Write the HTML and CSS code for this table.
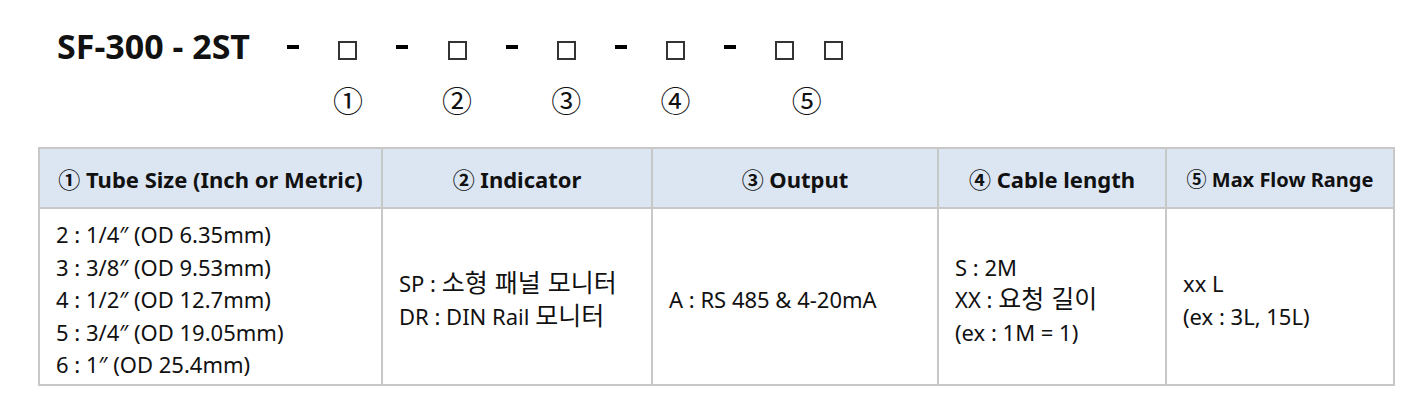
FILE: index.html
```html
<!DOCTYPE html>
<html lang="ko">
<head>
    <meta charset="UTF-8">
    <meta name="viewport" content="width=device-width, initial-scale=1.0">
    <title>SF-300 Ordering Code</title>
    <link rel="stylesheet" href="styles.css">
</head>
<body>
    <div class="code">
        <span class="model">SF-300 - 2ST</span>
        <span class="slot"><i class="dash"></i></span>
        <span class="slot"><i class="box"></i></span>
        <span class="slot"><i class="dash"></i></span>
        <span class="slot"><i class="box"></i></span>
        <span class="slot"><i class="dash"></i></span>
        <span class="slot"><i class="box"></i></span>
        <span class="slot"><i class="dash"></i></span>
        <span class="slot"><i class="box"></i></span>
        <span class="slot"><i class="dash"></i></span>
        <span class="slot"><i class="box"></i></span>
        <span class="slot"><i class="box"></i></span>

        <span class="num n1">①</span>
        <span class="num n2">②</span>
        <span class="num n3">③</span>
        <span class="num n4">④</span>
        <span class="num n5">⑤</span>
    </div>

    <table class="spec">
        <colgroup>
            <col class="c1">
            <col class="c2">
            <col class="c3">
            <col class="c4">
            <col class="c5">
        </colgroup>
        <thead>
            <tr>
                <th>① Tube Size (Inch or Metric)</th>
                <th>② Indicator</th>
                <th>③ Output</th>
                <th>④ Cable length</th>
                <th class="small">⑤ Max Flow Range</th>
            </tr>
        </thead>
        <tbody>
            <tr>
                <td>
                    2 : 1/4″ (OD 6.35mm)<br>
                    3 : 3/8″ (OD 9.53mm)<br>
                    4 : 1/2″ (OD 12.7mm)<br>
                    5 : 3/4″ (OD 19.05mm)<br>
                    6 : 1″ (OD 25.4mm)
                </td>
                <td>
                    SP : <span class="ko">소형 패널 모니터</span><br>
                    DR : DIN Rail <span class="ko">모니터</span>
                </td>
                <td>A : RS 485 &amp; 4-20mA</td>
                <td>
                    S : 2M<br>
                    XX : <span class="ko">요청 길이</span><br>
                    (ex : 1M = 1)
                </td>
                <td>
                    xx L<br>
                    (ex : 3L, 15L)
                </td>
            </tr>
        </tbody>
    </table>
</body>
</html>
```

FILE: styles.css
```css
body {
    margin: 0;
    background-color: #fff;
    color: #111;
    font-family: "Noto Sans", "Noto Sans CJK KR", sans-serif;
}
.code {
    display: grid;
    grid-template-columns: 209px repeat(10, 54.6px) 44px;
    grid-template-rows: 40px 40px;
    row-gap: 9px;
    padding: 30px 0 0 57px;
}
.model {
    font-size: 34px;
    font-weight: bold;
    line-height: 32px;
    white-space: nowrap;
}
.slot {
    display: flex;
    align-items: center;
    justify-content: center;
}
.dash {
    display: block;
    width: 12px;
    height: 4px;
    background-color: #000;
    margin-bottom: 6px;
}
.box {
    display: block;
    width: 15px;
    height: 15px;
    border: 2px solid #333;
}
.num {
    grid-row: 2;
    text-align: center;
    font-family: "Noto Sans CJK KR", sans-serif;
    font-size: 30px;
    line-height: 40px;
}
.n1 { grid-column: 3; }
.n2 { grid-column: 5; }
.n3 { grid-column: 7; }
.n4 { grid-column: 9; }
.n5 { grid-column: 11 / span 2; }
.spec {
    margin: 28px 0 0 38px;
    width: 1355px;
    border-collapse: collapse;
    table-layout: fixed;
}
.c1 { width: 343px; }
.c2 { width: 270px; }
.c3 { width: 286px; }
.c4 { width: 228px; }
.c5 { width: 228px; }
.spec th, .spec td {
    border: 2px solid #c8c8c8;
}
.spec th {
    height: 58px;
    padding: 0;
    background-color: #dce6f3;
    font-size: 22px;
    font-weight: bold;
    text-align: center;
    white-space: nowrap;
}
.spec th.small {
    font-size: 20px;
}
.spec td {
    height: 169px;
    padding: 6px 0 0 16px;
    font-size: 22px;
    line-height: 32.5px;
    vertical-align: middle;
    text-align: left;
}
.ko {
    font-family: "Noto Sans CJK KR", sans-serif;
    font-size: 25px;
    line-height: 1;
}
```
